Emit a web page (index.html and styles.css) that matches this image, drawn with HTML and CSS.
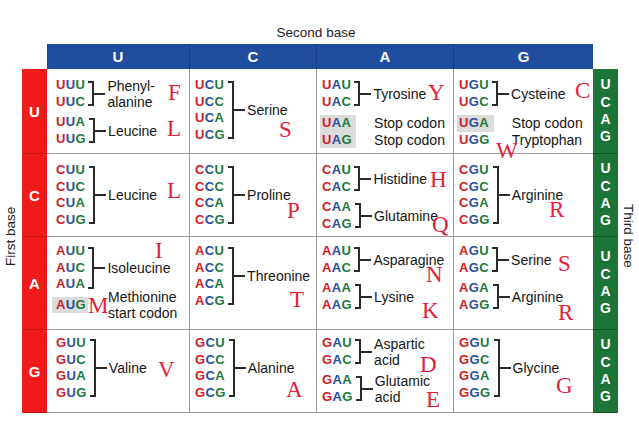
FILE: index.html
```html
<!DOCTYPE html>
<html>
<head>
<meta charset="utf-8">
<title>Genetic code</title>
<link rel="stylesheet" href="styles.css">
</head>
<body>
<div class="chart">
  <div class="title">Second base</div>
  <div class="first">First base</div>
  <div class="third">Third base</div>

  <div class="hd c1">U</div>
  <div class="hd c2">C</div>
  <div class="hd c3">A</div>
  <div class="hd c4">G</div>

  <!-- Row U -->
  <div class="fb ru">U</div>
  <div class="cell c1 ru">
    <div class="grp">
      <div class="cds"><div class="cd"><i>U</i><i>U</i><i>U</i></div><div class="cd"><i>U</i><i>U</i><i>C</i></div></div>
      <div class="br"></div><div class="tk"></div>
      <div class="lbl">Phenyl-<br>alanine</div>
    </div>
    <div class="grp">
      <div class="cds"><div class="cd"><i>U</i><i>U</i><i>A</i></div><div class="cd"><i>U</i><i>U</i><i>G</i></div></div>
      <div class="br"></div><div class="tk"></div>
      <div class="lbl">Leucine</div>
    </div>
    <span class="aa aa-f">F</span>
    <span class="aa aa-l1">L</span>
  </div>
  <div class="cell c2 ru">
    <div class="grp">
      <div class="cds"><div class="cd"><i>U</i><i>C</i><i>U</i></div><div class="cd"><i>U</i><i>C</i><i>C</i></div><div class="cd"><i>U</i><i>C</i><i>A</i></div><div class="cd"><i>U</i><i>C</i><i>G</i></div></div>
      <div class="br"></div><div class="tk"></div>
      <div class="lbl">Serine</div>
    </div>
    <span class="aa aa-s1">S</span>
  </div>
  <div class="cell c3 ru">
    <div class="grp">
      <div class="cds"><div class="cd"><i>U</i><i>A</i><i>U</i></div><div class="cd"><i>U</i><i>A</i><i>C</i></div></div>
      <div class="br"></div><div class="tk"></div>
      <div class="lbl">Tyrosine</div>
    </div>
    <div class="grp stop">
      <div class="cds hl"><div class="cd"><i>U</i><i>A</i><i>A</i></div><div class="cd"><i>U</i><i>A</i><i>G</i></div></div>
      <div class="br off"></div><div class="tk off"></div>
      <div class="lbl st">Stop codon<br>Stop codon</div>
    </div>
    <span class="aa aa-y">Y</span>
  </div>
  <div class="cell c4 ru">
    <div class="grp">
      <div class="cds"><div class="cd"><i>U</i><i>G</i><i>U</i></div><div class="cd"><i>U</i><i>G</i><i>C</i></div></div>
      <div class="br"></div><div class="tk"></div>
      <div class="lbl">Cysteine</div>
    </div>
    <div class="grp stop">
      <div class="cds"><div class="cd hl"><i>U</i><i>G</i><i>A</i></div><div class="cd"><i>U</i><i>G</i><i>G</i></div></div>
      <div class="br off"></div><div class="tk off"></div>
      <div class="lbl st">Stop codon<br>Tryptophan</div>
    </div>
    <span class="aa aa-c">C</span>
    <span class="aa aa-w">W</span>
  </div>
  <div class="tb ru"><span>U</span><span>C</span><span>A</span><span>G</span></div>

  <!-- Row C -->
  <div class="fb rc">C</div>
  <div class="cell c1 rc">
    <div class="grp">
      <div class="cds"><div class="cd"><i>C</i><i>U</i><i>U</i></div><div class="cd"><i>C</i><i>U</i><i>C</i></div><div class="cd"><i>C</i><i>U</i><i>A</i></div><div class="cd"><i>C</i><i>U</i><i>G</i></div></div>
      <div class="br"></div><div class="tk"></div>
      <div class="lbl">Leucine</div>
    </div>
    <span class="aa aa-l2">L</span>
  </div>
  <div class="cell c2 rc">
    <div class="grp">
      <div class="cds"><div class="cd"><i>C</i><i>C</i><i>U</i></div><div class="cd"><i>C</i><i>C</i><i>C</i></div><div class="cd"><i>C</i><i>C</i><i>A</i></div><div class="cd"><i>C</i><i>C</i><i>G</i></div></div>
      <div class="br"></div><div class="tk"></div>
      <div class="lbl">Proline</div>
    </div>
    <span class="aa aa-p">P</span>
  </div>
  <div class="cell c3 rc">
    <div class="grp">
      <div class="cds"><div class="cd"><i>C</i><i>A</i><i>U</i></div><div class="cd"><i>C</i><i>A</i><i>C</i></div></div>
      <div class="br"></div><div class="tk"></div>
      <div class="lbl">Histidine</div>
    </div>
    <div class="grp">
      <div class="cds"><div class="cd"><i>C</i><i>A</i><i>A</i></div><div class="cd"><i>C</i><i>A</i><i>G</i></div></div>
      <div class="br"></div><div class="tk"></div>
      <div class="lbl">Glutamine</div>
    </div>
    <span class="aa aa-h">H</span>
    <span class="aa aa-q">Q</span>
  </div>
  <div class="cell c4 rc">
    <div class="grp">
      <div class="cds"><div class="cd"><i>C</i><i>G</i><i>U</i></div><div class="cd"><i>C</i><i>G</i><i>C</i></div><div class="cd"><i>C</i><i>G</i><i>A</i></div><div class="cd"><i>C</i><i>G</i><i>G</i></div></div>
      <div class="br"></div><div class="tk"></div>
      <div class="lbl">Arginine</div>
    </div>
    <span class="aa aa-r1">R</span>
  </div>
  <div class="tb rc"><span>U</span><span>C</span><span>A</span><span>G</span></div>

  <!-- Row A -->
  <div class="fb ra">A</div>
  <div class="cell c1 ra">
    <div class="grp">
      <div class="cds"><div class="cd"><i>A</i><i>U</i><i>U</i></div><div class="cd"><i>A</i><i>U</i><i>C</i></div><div class="cd"><i>A</i><i>U</i><i>A</i></div></div>
      <div class="br"></div><div class="tk"></div>
      <div class="lbl">Isoleucine</div>
    </div>
    <div class="grp">
      <div class="cds"><div class="cd hl hl-m"><i>A</i><i>U</i><i>G</i></div></div>
      <div class="br off"></div><div class="tk off"></div>
      <div class="lbl met">Methionine<br>start codon</div>
    </div>
    <span class="aa aa-i">I</span>
    <span class="aa aa-m">M</span>
  </div>
  <div class="cell c2 ra">
    <div class="grp">
      <div class="cds"><div class="cd"><i>A</i><i>C</i><i>U</i></div><div class="cd"><i>A</i><i>C</i><i>C</i></div><div class="cd"><i>A</i><i>C</i><i>A</i></div><div class="cd"><i>A</i><i>C</i><i>G</i></div></div>
      <div class="br"></div><div class="tk"></div>
      <div class="lbl">Threonine</div>
    </div>
    <span class="aa aa-t">T</span>
  </div>
  <div class="cell c3 ra">
    <div class="grp">
      <div class="cds"><div class="cd"><i>A</i><i>A</i><i>U</i></div><div class="cd"><i>A</i><i>A</i><i>C</i></div></div>
      <div class="br"></div><div class="tk"></div>
      <div class="lbl">Asparagine</div>
    </div>
    <div class="grp">
      <div class="cds"><div class="cd"><i>A</i><i>A</i><i>A</i></div><div class="cd"><i>A</i><i>A</i><i>G</i></div></div>
      <div class="br"></div><div class="tk"></div>
      <div class="lbl">Lysine</div>
    </div>
    <span class="aa aa-n">N</span>
    <span class="aa aa-k">K</span>
  </div>
  <div class="cell c4 ra">
    <div class="grp">
      <div class="cds"><div class="cd"><i>A</i><i>G</i><i>U</i></div><div class="cd"><i>A</i><i>G</i><i>C</i></div></div>
      <div class="br"></div><div class="tk"></div>
      <div class="lbl">Serine</div>
    </div>
    <div class="grp">
      <div class="cds"><div class="cd"><i>A</i><i>G</i><i>A</i></div><div class="cd"><i>A</i><i>G</i><i>G</i></div></div>
      <div class="br"></div><div class="tk"></div>
      <div class="lbl">Arginine</div>
    </div>
    <span class="aa aa-s2">S</span>
    <span class="aa aa-r2">R</span>
  </div>
  <div class="tb ra"><span>U</span><span>C</span><span>A</span><span>G</span></div>

  <!-- Row G -->
  <div class="fb rg">G</div>
  <div class="cell c1 rg">
    <div class="grp">
      <div class="cds"><div class="cd"><i>G</i><i>U</i><i>U</i></div><div class="cd"><i>G</i><i>U</i><i>C</i></div><div class="cd"><i>G</i><i>U</i><i>A</i></div><div class="cd"><i>G</i><i>U</i><i>G</i></div></div>
      <div class="br"></div><div class="tk"></div>
      <div class="lbl">Valine</div>
    </div>
    <span class="aa aa-v">V</span>
  </div>
  <div class="cell c2 rg">
    <div class="grp">
      <div class="cds"><div class="cd"><i>G</i><i>C</i><i>U</i></div><div class="cd"><i>G</i><i>C</i><i>C</i></div><div class="cd"><i>G</i><i>C</i><i>A</i></div><div class="cd"><i>G</i><i>C</i><i>G</i></div></div>
      <div class="br"></div><div class="tk"></div>
      <div class="lbl">Alanine</div>
    </div>
    <span class="aa aa-a">A</span>
  </div>
  <div class="cell c3 rg">
    <div class="grp">
      <div class="cds"><div class="cd"><i>G</i><i>A</i><i>U</i></div><div class="cd"><i>G</i><i>A</i><i>C</i></div></div>
      <div class="br"></div><div class="tk"></div>
      <div class="lbl">Aspartic<br>acid</div>
    </div>
    <div class="grp">
      <div class="cds"><div class="cd"><i>G</i><i>A</i><i>A</i></div><div class="cd"><i>G</i><i>A</i><i>G</i></div></div>
      <div class="br"></div><div class="tk"></div>
      <div class="lbl">Glutamic<br>acid</div>
    </div>
    <span class="aa aa-d">D</span>
    <span class="aa aa-e">E</span>
  </div>
  <div class="cell c4 rg">
    <div class="grp">
      <div class="cds"><div class="cd"><i>G</i><i>G</i><i>U</i></div><div class="cd"><i>G</i><i>G</i><i>C</i></div><div class="cd"><i>G</i><i>G</i><i>A</i></div><div class="cd"><i>G</i><i>G</i><i>G</i></div></div>
      <div class="br"></div><div class="tk"></div>
      <div class="lbl">Glycine</div>
    </div>
    <span class="aa aa-g">G</span>
  </div>
  <div class="tb rg"><span>U</span><span>C</span><span>A</span><span>G</span></div>
</div>
</body>
</html>
```

FILE: styles.css
```css
* { box-sizing: border-box; }

body {
  margin: 0;
  background: #fff;
  font-family: "Liberation Sans", Arial, sans-serif;
  color: #161616;
}

.chart {
  display: grid;
  grid-template-columns: 22px 25px 142px 127px 137px 140px 25px 21px;
  grid-template-rows: 44px 25px 85px 83px 93px 83px;
}

/* grid placement */
.c1 { grid-column: 3; }
.c2 { grid-column: 4; }
.c3 { grid-column: 5; }
.c4 { grid-column: 6; }
.ru { grid-row: 3; }
.rc { grid-row: 4; }
.ra { grid-row: 5; }
.rg { grid-row: 6; }

.title {
  grid-column: 3 / 7;
  grid-row: 1;
  align-self: end;
  text-align: center;
  font-size: 13.5px;
  line-height: 16px;
  padding: 0 8px 3px 0;
  color: #1c1c1c;
}

.first {
  grid-column: 1;
  grid-row: 3 / 7;
  writing-mode: vertical-rl;
  transform: rotate(180deg);
  display: flex;
  align-items: center;
  justify-content: center;
  font-size: 13.5px;
  padding-top: 10px;
  padding-left: 1px;
  color: #1c1c1c;
}

.third {
  grid-column: 8;
  grid-row: 3 / 7;
  writing-mode: vertical-rl;
  display: flex;
  align-items: center;
  justify-content: center;
  font-size: 13.5px;
  padding-bottom: 11px;
  color: #1c1c1c;
}

.hd {
  grid-row: 2;
  background: #1f4e9f;
  color: #fff;
  font-weight: bold;
  font-size: 15px;
  display: flex;
  align-items: center;
  justify-content: center;
}
.hd + .hd { border-left: 1px solid #183f82; }

.fb {
  grid-column: 2;
  background: #ef1a1a;
  color: #fff;
  font-weight: bold;
  font-size: 15px;
  display: flex;
  align-items: center;
  justify-content: center;
  border-bottom: 1px solid #c81414;
}

.tb {
  grid-column: 7;
  background: #1a7537;
  color: #fff;
  font-weight: bold;
  font-size: 14px;
  line-height: 17.3px;
  display: flex;
  flex-direction: column;
  align-items: center;
  justify-content: center;
  border-bottom: 1px solid #105a28;
}

.cell {
  position: relative;
  display: flex;
  flex-direction: column;
  align-items: flex-start;
  gap: 4px;
  padding: 8px 0 0 5px;
  border-bottom: 1px solid #9c9c9c;
}
.cell.c1 { padding-left: 9px; }
.cell.c2, .cell.c3, .cell.c4 { border-left: 1px solid #9c9c9c; }
.cell.ra { padding-top: 6px; }
.cell.rg { padding-top: 5px; }

.grp {
  display: flex;
  align-items: center;
}
.grp.stop { margin-top: 1px; }

.cds {
  font-weight: bold;
  font-size: 13px;
  line-height: 16.5px;
  letter-spacing: 0.4px;
}
.cd i { font-style: normal; }
.cd i:nth-child(1) { color: #d51a24; }
.cd i:nth-child(2) { color: #2a4f9e; }
.cd i:nth-child(3) { color: #1b7a3b; }

.hl { background: #dcdcdc; }
.cds.hl { padding: 0 4px 0 2px; margin: 0 -4px 0 -2px; }
.cd.hl { padding: 0 4px 0 2px; margin: 0 -4px 0 -2px; }
.cd.hl-m { padding: 0 2px 0 4px; margin: 0 -2px 0 -4px; }

.br {
  align-self: stretch;
  width: 6px;
  margin: 3.5px 0 4px 3px;
  border: 2px solid #2a2a2a;
  border-left: 0;
}
.tk {
  width: 11px;
  height: 2px;
  background: #2a2a2a;
  margin-right: 2px;
}
.off { visibility: hidden; }

.lbl {
  font-size: 14px;
  line-height: 16px;
  white-space: nowrap;
}
.lbl.st { line-height: 16.5px; }
.lbl.met { margin: -8px 0; }

.aa {
  position: absolute;
  font-family: "Liberation Serif", "Times New Roman", serif;
  font-size: 23px;
  line-height: 23px;
  color: #e4203a;
}
.aa-f { left: 121px; top: 12px; }
.aa-l1 { left: 120px; top: 48px; }
.aa-s1 { left: 89px; top: 49px; }
.aa-y { left: 111px; top: 12px; }
.aa-c { left: 121px; top: 10px; }
.aa-w { left: 42px; top: 70px; }
.aa-l2 { left: 120px; top: 25px; }
.aa-p { left: 97px; top: 45px; }
.aa-h { left: 113px; top: 14px; }
.aa-q { left: 115px; top: 59px; }
.aa-r1 { left: 95px; top: 44px; }
.aa-i { left: 108px; top: 2px; }
.aa-m { left: 41px; top: 57px; }
.aa-t { left: 100px; top: 51px; }
.aa-n { left: 109px; top: 26px; }
.aa-k { left: 105px; top: 62px; }
.aa-s2 { left: 104px; top: 15px; }
.aa-r2 { left: 104px; top: 64px; }
.aa-v { left: 111px; top: 28px; }
.aa-a { left: 96px; top: 48px; }
.aa-d { left: 103px; top: 23px; }
.aa-e { left: 109px; top: 58px; }
.aa-g { left: 102px; top: 44px; }
```
